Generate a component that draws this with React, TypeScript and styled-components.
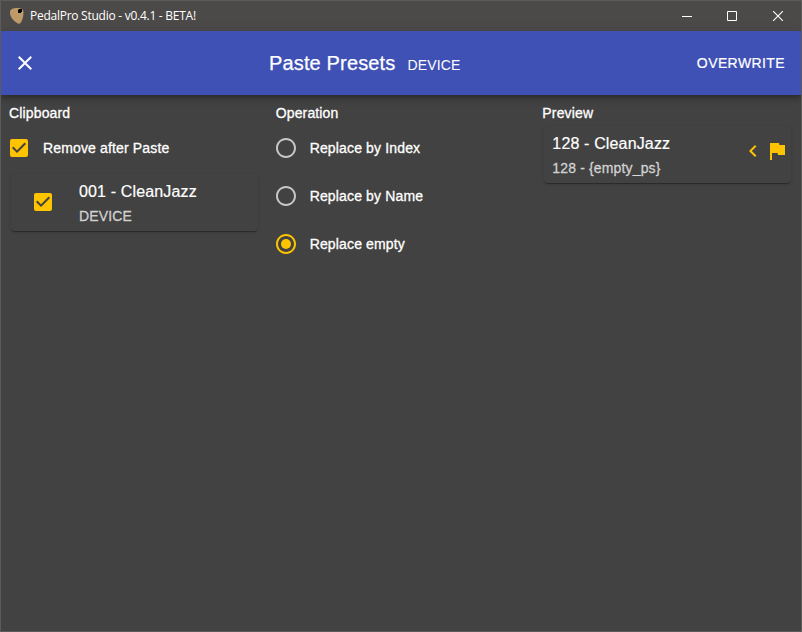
import React from "react";
import styled, { createGlobalStyle } from "styled-components";

const GlobalStyle = createGlobalStyle`
  *, *::before, *::after { box-sizing: border-box; }
  body {
    margin: 0;
    background: #424242;
    color: #fff;
    font-family: "Liberation Sans", Arial, sans-serif;
  }
`;

const Window = styled.div`
  width: 802px;
  height: 632px;
  display: flex;
  flex-direction: column;
  overflow: hidden;
  background: #424242;
  border: 1px solid #5c5b59;
`;

const TitleBar = styled.header`
  height: 30px;
  flex: none;
  display: flex;
  align-items: center;
  background: #4c4a48;
`;

const AppIcon = styled.svg`
  width: 16px;
  height: 18px;
  margin-left: 8px;
`;

const WindowTitle = styled.span`
  margin-left: 5px;
  flex: 1;
  font: 12px/16px "Open Sans", "Noto Sans", sans-serif;
  letter-spacing: -0.26px;
`;

const WindowButton = styled.button<{ $width: number }>`
  width: ${(p) => p.$width}px;
  height: 30px;
  padding: 0;
  border: 0;
  display: grid;
  place-items: center;
  background: none;
  color: #fff;
`;

const AppBar = styled.div`
  height: 64px;
  flex: none;
  display: flex;
  align-items: center;
  padding: 0 16px 0 12px;
  position: relative;
  background: #3f51b5;
  box-shadow: 0 2px 4px -1px rgba(0, 0, 0, 0.2), 0 4px 5px rgba(0, 0, 0, 0.14),
    0 1px 10px rgba(0, 0, 0, 0.12);
`;

const CloseButton = styled.button`
  width: 24px;
  height: 24px;
  padding: 0;
  border: 0;
  background: none;
  color: #fff;
`;

const Heading = styled.div`
  flex: 1;
  display: flex;
  align-items: baseline;
  padding-left: 232px;
`;

const Title = styled.h1`
  margin: 0;
  font-size: 20px;
  font-weight: 400;
  line-height: 32px;
  letter-spacing: 0.15px;
  -webkit-text-stroke: 0.25px currentColor;
`;

const Source = styled.span`
  margin-left: 12px;
  font-size: 14px;
  letter-spacing: 0.15px;
`;

const ActionButton = styled.button`
  padding: 0;
  border: 0;
  background: none;
  color: #fff;
  font: 14px/24px "Liberation Sans", Arial, sans-serif;
  letter-spacing: 0.4px;
  -webkit-text-stroke: 0.2px currentColor;
`;

const Columns = styled.main`
  flex: 1;
  display: grid;
  grid-template-columns: repeat(3, 1fr);
`;

const Column = styled.section`
  padding: 8px;
`;

const ColumnTitle = styled.h2`
  margin: 0;
  font-size: 14px;
  font-weight: 400;
  line-height: 20px;
  letter-spacing: 0.15px;
  -webkit-text-stroke: 0.3px currentColor;
`;

const Choice = styled.label`
  height: 48px;
  display: flex;
  align-items: center;
  margin-left: -2px;
`;

const ChoiceText = styled.span`
  margin-left: 12px;
  font-size: 14px;
  line-height: 20px;
  letter-spacing: 0.15px;
  -webkit-text-stroke: 0.3px currentColor;
`;

const Choices = styled.div`
  padding-top: 1px;
`;

const Card = styled.article`
  height: 57px;
  display: flex;
  align-items: center;
  margin: 0 2px;
  padding-bottom: 1px;
  border-radius: 4px;
  background: #424242;
  box-shadow: 0 2px 1px -1px rgba(0, 0, 0, 0.2), 0 1px 1px rgba(0, 0, 0, 0.14),
    0 1px 3px rgba(0, 0, 0, 0.12);
`;

const ClipboardCard = styled(Card)`
  gap: 24px;
  padding-left: 20px;
  margin-top: 2px;
`;

const PreviewCard = styled(Card)`
  padding-left: 8px;
  padding-right: 2px;
  margin-top: 3px;
`;

const CardText = styled.div`
  flex: 1;
  margin-top: 3px;
`;

const CardName = styled.div`
  font-size: 16px;
  line-height: 24px;
  letter-spacing: 0.15px;
  -webkit-text-stroke: 0.2px currentColor;
`;

const CardDetail = styled.div`
  margin-top: 1px;
  font-size: 14px;
  line-height: 22px;
  letter-spacing: 0.15px;
  color: rgba(255, 255, 255, 0.7);
  -webkit-text-stroke: 0.3px currentColor;
`;

const Status = styled.div`
  display: flex;
  margin-bottom: 6px;
`;

const Glyph = styled.svg<{ $color?: string }>`
  width: 24px;
  height: 24px;
  flex: none;
  display: block;
  fill: ${(p) => p.$color ?? "#ffc400"};
`;

const CheckedBox = () => (
  <Glyph viewBox="0 0 24 24">
    <path d="M19 3H5c-1.11 0-2 .9-2 2v14c0 1.1.89 2 2 2h14c1.11 0 2-.9 2-2V5c0-1.1-.89-2-2-2zm-9 14l-5-5 1.41-1.41L10 14.17l7.59-7.59L19 8l-9 9z" />
  </Glyph>
);

const RadioMark = ({ selected }: { selected: boolean }) => (
  <Glyph viewBox="0 0 24 24" $color={selected ? "#ffc400" : "rgba(255,255,255,.7)"}>
    <path d="M12 2C6.48 2 2 6.48 2 12s4.48 10 10 10 10-4.48 10-10S17.52 2 12 2zm0 18c-4.42 0-8-3.58-8-8s3.58-8 8-8 8 3.58 8 8-3.58 8-8 8z" />
    {selected && <circle cx="12" cy="12" r="5" />}
  </Glyph>
);

const operations = ["Replace by Index", "Replace by Name", "Replace empty"];

export default function App() {
  return (
    <Window>
      <GlobalStyle />
      <TitleBar>
        <AppIcon viewBox="0 0 16 18">
          <path d="M1 5.500C1 2 4 1 8 1c4 0 6.500 1 6.500 4 0 5-1.300 8.500-3 11-1 1.300-2.500.8-3.800-.2C4 13.500 1 9.500 1 5.500z" fill="#bf9a69" />
          <path d="M9.500 2h3.500v3H12v1H9V3h.5z" fill="#050505" />
        </AppIcon>
        <WindowTitle>PedalPro Studio - v0.4.1 - BETA!</WindowTitle>
        <WindowButton $width={45} aria-label="Minimize">
          <svg width="10" height="10"><path d="M0 5.500h10" stroke="currentColor" /></svg>
        </WindowButton>
        <WindowButton $width={46} aria-label="Maximize">
          <svg width="10" height="10"><path d="M.5.5h9v9h-9z" fill="none" stroke="currentColor" /></svg>
        </WindowButton>
        <WindowButton $width={46} aria-label="Close window">
          <svg width="10" height="10"><path d="M0 0l10 10M10 0L0 10" stroke="currentColor" strokeWidth="1.100" /></svg>
        </WindowButton>
      </TitleBar>
      <AppBar>
        <CloseButton aria-label="Close">
          <Glyph viewBox="0 0 24 24" $color="#fff">
            <path d="M19 6.410L17.590 5 12 10.590 6.410 5 5 6.410 10.590 12 5 17.590 6.410 19 12 13.410 17.590 19 19 17.590 13.410 12z" />
          </Glyph>
        </CloseButton>
        <Heading>
          <Title>Paste Presets</Title>
          <Source>DEVICE</Source>
        </Heading>
        <ActionButton>OVERWRITE</ActionButton>
      </AppBar>
      <Columns>
        <Column>
          <ColumnTitle>Clipboard</ColumnTitle>
          <Choices>
            <Choice>
              <CheckedBox />
              <ChoiceText>Remove after Paste</ChoiceText>
            </Choice>
          </Choices>
          <ClipboardCard>
            <CheckedBox />
            <CardText>
              <CardName>001 - CleanJazz</CardName>
              <CardDetail>DEVICE</CardDetail>
            </CardText>
          </ClipboardCard>
        </Column>
        <Column>
          <ColumnTitle>Operation</ColumnTitle>
          <Choices>
            {operations.map((name) => (
              <Choice key={name}>
                <RadioMark selected={name === "Replace empty"} />
                <ChoiceText>{name}</ChoiceText>
              </Choice>
            ))}
          </Choices>
        </Column>
        <Column>
          <ColumnTitle>Preview</ColumnTitle>
          <PreviewCard>
            <CardText>
              <CardName>128 - CleanJazz</CardName>
              <CardDetail>128 - {"{empty_ps}"}</CardDetail>
            </CardText>
            <Status>
              <Glyph viewBox="0 0 24 24">
                <path d="M15.410 7.410L14 6l-6 6 6 6 1.410-1.410L10.830 12z" />
              </Glyph>
              <Glyph viewBox="0 0 24 24">
                <path d="M14.400 6L14 4H5v17h2v-7h5.600l.4 2h7V6z" />
              </Glyph>
            </Status>
          </PreviewCard>
        </Column>
      </Columns>
    </Window>
  );
}
